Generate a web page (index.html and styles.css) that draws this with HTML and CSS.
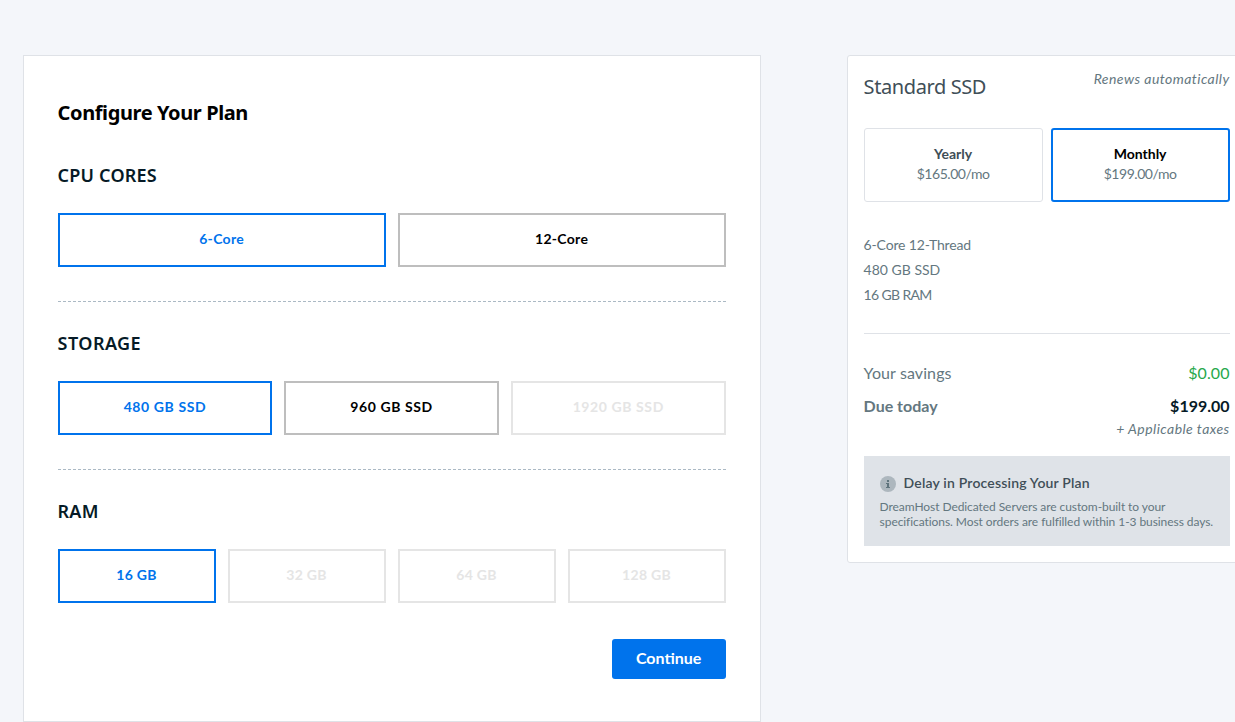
FILE: index.html
```html
<!DOCTYPE html>
<html lang="en">
<head>
    <meta charset="UTF-8">
    <meta name="viewport" content="width=device-width, initial-scale=1.0">
    <title>Configure Your Plan</title>
    <link rel="stylesheet" href="styles.css">
</head>
<body>
    <main class="page">
        <!-- Plan options -->
        <form class="config-card">
            <h1>Configure Your Plan</h1>

            <section class="config-section">
                <h2>CPU CORES</h2>
                <div class="options">
                    <button type="button" class="option selected">6-Core</button>
                    <button type="button" class="option">12-Core</button>
                </div>
            </section>

            <section class="config-section storage">
                <h2>STORAGE</h2>
                <div class="options">
                    <button type="button" class="option selected">480 GB SSD</button>
                    <button type="button" class="option">960 GB SSD</button>
                    <button type="button" class="option" disabled>1920 GB SSD</button>
                </div>
            </section>

            <section class="config-section">
                <h2>RAM</h2>
                <div class="options">
                    <button type="button" class="option selected">16 GB</button>
                    <button type="button" class="option" disabled>32 GB</button>
                    <button type="button" class="option" disabled>64 GB</button>
                    <button type="button" class="option" disabled>128 GB</button>
                </div>
            </section>

            <div class="actions">
                <button type="button" class="continue">Continue</button>
            </div>
        </form>

        <!-- Order summary -->
        <aside class="summary-card">
            <div class="summary-header">
                <h2>Standard SSD</h2>
                <em class="renews">Renews automatically</em>
            </div>

            <div class="terms">
                <div class="term">
                    <strong>Yearly</strong>
                    <span>$165.00/mo</span>
                </div>
                <div class="term selected">
                    <strong>Monthly</strong>
                    <span>$199.00/mo</span>
                </div>
            </div>

            <ul class="specs">
                <li>6-Core 12-Thread</li>
                <li class="disk">480 GB SSD</li>
                <li class="memory">16 GB RAM</li>
            </ul>

            <div class="totals">
                <div class="total-row">
                    <span>Your savings</span>
                    <span class="savings">$0.00</span>
                </div>
                <div class="total-row due">
                    <span>Due today</span>
                    <span class="due-amount">$199.00</span>
                </div>
                <em class="taxes">+ Applicable taxes</em>
            </div>

            <div class="notice">
                <h3>
                    <svg class="info-icon" width="16" height="16" viewBox="0 0 16 16">
                        <circle cx="8" cy="8" r="8" fill="#adb7be"/>
                        <path d="M7 4h2v2H7zM6 7h3v4h1v1H6v-1h1V8H6z" fill="#5f747d"/>
                    </svg>
                    Delay in Processing Your Plan
                </h3>
                <p>DreamHost Dedicated Servers are custom-built to your<br>specifications. Most orders are fulfilled within 1-3 business days.</p>
            </div>
        </aside>
    </main>
</body>
</html>
```

FILE: styles.css
```css
* {
    box-sizing: border-box;
}
body {
    margin: 0;
    overflow: hidden;
    background-color: #f4f6fa;
    font-family: Lato, "Liberation Sans", sans-serif;
    color: #647780;
}
h1, h2, h3, p, ul {
    margin: 0;
    padding: 0;
}
button {
    font-family: inherit;
    cursor: pointer;
}
.page {
    display: flex;
    align-items: flex-start;
    gap: 86px;
    padding: 55px 0 0 22.6px;
}

/* Left card */
.config-card {
    flex: none;
    width: 738px;
    height: 667px;
    padding: 43px 34px;
    background-color: #fff;
    border: 1px solid #dfe2e7;
}
.config-card h1 {
    height: 35px;
    line-height: 28px;
    font-family: "Noto Sans", sans-serif;
    font-size: 20px;
    font-weight: 700;
    letter-spacing: -0.4px;
    color: #000;
}
.config-section {
    padding: 28px 0 34px;
    border-bottom: 1px dashed #abb9c4;
}
.config-section:last-of-type {
    padding-bottom: 36px;
    border-bottom: 0;
}
.config-section h2 {
    margin-bottom: 25px;
    line-height: 26px;
    font-family: "Noto Sans", sans-serif;
    font-size: 18px;
    font-weight: 600;
    letter-spacing: 0.2px;
    color: #061a26;
}
.options {
    display: flex;
    gap: 12px;
}
.option {
    flex: 1 1 0;
    height: 54px;
    padding: 0 0 4px;
    background-color: #fff;
    border: 2px solid #bebebe;
    font-size: 14px;
    font-weight: 700;
    letter-spacing: 0.3px;
    color: #000;
}
.storage h2 {
    letter-spacing: 0.45px;
}
.storage .option {
    letter-spacing: 0.6px;
}
.option.selected {
    border-color: #0073ec;
    color: #0073ec;
}
.option:disabled {
    border-color: #e5e5e5;
    color: #e5e5e5;
}
.actions {
    display: flex;
    justify-content: flex-end;
}
.continue {
    width: 114px;
    height: 40px;
    padding: 0 0 4px;
    background-color: #0073ec;
    border: 0;
    border-radius: 3px;
    font-size: 16px;
    font-weight: 700;
    color: #fff;
}

/* Right card */
.summary-card {
    flex: none;
    width: 400px;
    height: 508px;
    padding: 13px 16px 16px;
    background-color: #fff;
    border: 1px solid #dfe2e7;
    border-radius: 3px;
}
.summary-header, .terms, .specs, .totals, .notice {
    width: 366px;
}
.summary-header {
    display: flex;
    justify-content: space-between;
    height: 59px;
}
.summary-header h2 {
    padding-top: 4px;
    line-height: 28px;
    font-family: "Noto Sans", sans-serif;
    font-size: 20px;
    font-weight: 400;
    letter-spacing: -0.4px;
    color: #404e57;
}
.renews, .taxes {
    line-height: 20px;
    font-size: 14px;
    letter-spacing: 0.45px;
}
.terms {
    display: flex;
    gap: 8px;
}
.term {
    display: flex;
    flex-direction: column;
    align-items: center;
    width: 179px;
    height: 74px;
    padding-top: 15px;
    border: 1px solid #dfe2e7;
    border-radius: 3px;
    font-size: 14px;
    line-height: 20px;
}
.term strong {
    color: #404e57;
}
.term span {
    letter-spacing: -0.45px;
}
.term.selected {
    padding-top: 14px;
    border: 2px solid #0073ec;
}
.term.selected strong {
    color: #000;
}
.specs {
    padding: 30px 0 26px;
    border-bottom: 1px solid #dfe2e7;
    list-style: none;
    font-size: 14px;
    line-height: 25px;
    letter-spacing: -0.15px;
}
.specs .disk {
    letter-spacing: 0;
}
.specs .memory {
    letter-spacing: -0.65px;
}
.totals {
    display: flex;
    flex-direction: column;
    padding-top: 26px;
    font-size: 16px;
}
.total-row {
    display: flex;
    justify-content: space-between;
    line-height: 26px;
    letter-spacing: 0.1px;
}
.due {
    margin-top: 7px;
    font-weight: 700;
    letter-spacing: 0;
}
.savings {
    color: #27a84c;
}
.due-amount {
    color: #061a26;
}
.taxes {
    align-self: flex-end;
}
.notice {
    height: 90px;
    margin-top: 17px;
    padding: 17px 16px;
    background-color: #dfe3e8;
}
.notice h3 {
    display: flex;
    align-items: center;
    gap: 8px;
    line-height: 20px;
    font-size: 14px;
    font-weight: 600;
    letter-spacing: 0.18px;
    color: #404e57;
}
.info-icon {
    margin-top: 2px;
}
.notice p {
    padding-top: 6px;
    line-height: 15px;
    font-size: 12px;
    letter-spacing: -0.07px;
    white-space: nowrap;
}
```
